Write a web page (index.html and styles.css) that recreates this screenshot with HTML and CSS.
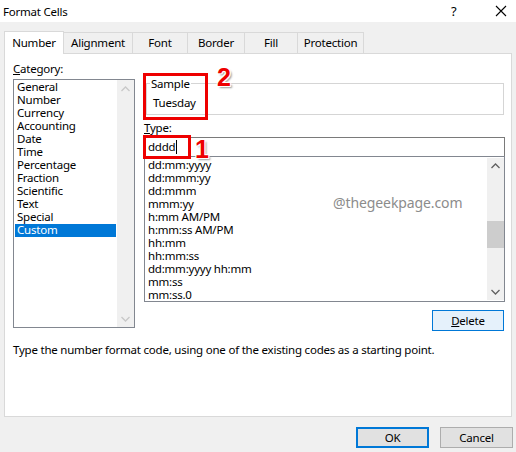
FILE: index.html
```html
<!DOCTYPE html>
<html>
<head>
<meta charset="utf-8">
<link rel="stylesheet" href="styles.css">
</head>
<body>
<div class="dialog">
  <div class="titlebar">
    <span class="title">Format Cells</span>
    <span class="help">?</span>
    <span class="close">
      <svg width="12" height="12" viewBox="0 0 12 12"><path d="M1 1 L11 11 M11 1 L1 11" stroke="#000" stroke-width="1.1" fill="none"/></svg>
    </span>
  </div>
  <div class="tabs">
    <div class="tab active">Number</div>
    <div class="tab w-align">Alignment</div>
    <div class="tab w-font">Font</div>
    <div class="tab w-border">Border</div>
    <div class="tab w-fill">Fill</div>
    <div class="tab w-prot">Protection</div>
  </div>
  <div class="panel">
    <div class="cols">
      <div class="leftcol">
        <div class="label"><u>C</u>ategory:</div>
        <div class="catlist">
          <div class="items">
            <div class="item">General</div>
            <div class="item">Number</div>
            <div class="item">Currency</div>
            <div class="item">Accounting</div>
            <div class="item">Date</div>
            <div class="item">Time</div>
            <div class="item">Percentage</div>
            <div class="item">Fraction</div>
            <div class="item">Scientific</div>
            <div class="item">Text</div>
            <div class="item">Special</div>
            <div class="item sel">Custom</div>
          </div>
          <div class="vscroll disabled">
            <svg class="arrow" width="9" height="6" viewBox="0 0 9 6"><path d="M0.5 5 L4.5 1 L8.5 5" stroke="#c8c8c8" stroke-width="1.3" fill="none"/></svg>
            <div class="track"></div>
            <svg class="arrow" width="9" height="6" viewBox="0 0 9 6"><path d="M0.5 1 L4.5 5 L8.5 1" stroke="#c8c8c8" stroke-width="1.3" fill="none"/></svg>
          </div>
        </div>
      </div>
      <div class="rightcol">
        <fieldset class="sample">
          <legend>Sample</legend>
          <div class="sampleval">Tuesday</div>
        </fieldset>
        <div class="label typelabel"><u>T</u>ype:</div>
        <div class="typeinput">dddd<span class="caret"></span></div>
        <div class="fmtlist">
          <div class="items">
            <div class="item">dd:mm:yyyy</div>
            <div class="item">dd:mmm:yy</div>
            <div class="item">dd:mmm</div>
            <div class="item">mmm:yy</div>
            <div class="item">h:mm AM/PM</div>
            <div class="item">h:mm:ss AM/PM</div>
            <div class="item">hh:mm</div>
            <div class="item">hh:mm:ss</div>
            <div class="item">dd:mm:yyyy hh:mm</div>
            <div class="item">mm:ss</div>
            <div class="item">mm:ss.0</div>
          </div>
          <div class="vscroll">
            <svg class="arrow" width="9" height="6" viewBox="0 0 9 6"><path d="M0.5 5 L4.5 1 L8.5 5" stroke="#606060" stroke-width="1.3" fill="none"/></svg>
            <div class="track"><div class="thumb"></div></div>
            <svg class="arrow" width="9" height="6" viewBox="0 0 9 6"><path d="M0.5 1 L4.5 5 L8.5 1" stroke="#606060" stroke-width="1.3" fill="none"/></svg>
          </div>
          <div class="watermark">@thegeekpage.com</div>
        </div>
        <div class="btnrow">
          <div class="btn delete"><u>D</u>elete</div>
        </div>
      </div>
    </div>
    <div class="desc">Type the number format code, using one of the existing codes as a starting point.</div>
  </div>
  <div class="footer">
    <div class="btn ok">OK</div>
    <div class="btn cancel">Cancel</div>
  </div>
  <div class="mark box2"></div>
  <div class="num n2">2</div>
  <div class="mark box1"></div>
  <div class="num n1">1</div>
</div>
</body>
</html>
```

FILE: styles.css
```css
* { box-sizing: border-box; }
html, body { margin: 0; padding: 0; }
body {
  width: 516px;
  height: 452px;
  overflow: hidden;
  background: #f0f0f0;
  font-family: "Noto Sans", "DejaVu Sans", sans-serif;
  font-size: 11.5px;
  letter-spacing: -0.22px;
  color: #000;
}
.dialog { position: relative; width: 516px; height: 452px; }
.titlebar {
  height: 22px;
  background: #fff;
  display: flex;
  align-items: center;
  padding-left: 3px;
}
.title { flex: 1; }
.help { width: 44px; font-size: 13px; }
.close { width: 21px; display: flex; align-items: center; }

.tabs {
  display: flex;
  align-items: flex-end;
  height: 31px;
  padding-left: 4px;
  padding-top: 8px;
}
.tab {
  height: 21px;
  border: 1px solid #d9d9d9;
  border-bottom: none;
  border-left: none;
  background: #f0f0f0;
  display: flex;
  align-items: center;
  justify-content: center;
  padding-bottom: 1px;
}
.tab.active {
  width: 60px;
  height: 23px;
  background: #fff;
  border-left: 1px solid #d9d9d9;
  margin-bottom: -1px;
  position: relative;
  z-index: 1;
  padding-bottom: 2px;
}
.w-align { width: 69px; }
.w-font { width: 55px; }
.w-border { width: 57px; }
.w-fill { width: 53px; }
.w-prot { width: 66px; }

.panel {
  margin-left: 4px;
  width: 508px;
  height: 364px;
  background: #fff;
  border: 1px solid #d9d9d9;
  padding: 6px 0 0 8px;
}
.cols { display: flex; gap: 9px; align-items: flex-start; }
.leftcol { width: 122px; padding-top: 1px; }
.label { height: 16px; line-height: 15px; }
.catlist {
  margin-top: 2px;
  height: 249px;
  border: 1px solid #828790;
  display: flex;
}
.items { flex: 1; padding: 1px 1px 0 1px; overflow: hidden; }
.item { height: 13px; line-height: 12px; padding-left: 2px; white-space: nowrap; }
.item.sel { background: #0078d7; color: #fff; }
.vscroll {
  width: 17px;
  background: #f0f0f0;
  display: flex;
  flex-direction: column;
  align-items: center;
}
.vscroll .arrow { margin: 5px 0; flex: none; }
.vscroll .track { flex: 1; width: 100%; position: relative; }
.catlist .vscroll .arrow:first-child { margin-top: 6px; }

.rightcol { width: 361px; }
.sample {
  margin: 16px 1px 0 2px;
  padding: 0 0 0 6px;
  height: 39px;
  border: 1px solid #d5d5d5;
}
.sample legend { padding: 0 1px; margin-left: -3px; line-height: 15px; }
.sampleval { line-height: 14px; margin-top: 5px; }
.typelabel { margin-top: 5px; height: 16px; }
.typeinput {
  margin-top: 1px;
  height: 20px;
  border: 1px solid #7a7a7a;
  padding-left: 3px;
  padding-bottom: 1px;
  line-height: 17px;
  display: flex;
  align-items: center;
}
.caret {
  display: inline-block;
  width: 1px;
  height: 14px;
  background: #000;
  margin-left: 1px;
}
.fmtlist {
  position: relative;
  margin-top: -1px;
  height: 146px;
  border: 1px solid #828790;
  display: flex;
}
.fmtlist .items { padding-top: 2px; }
.fmtlist .vscroll { margin: 1px 0; }
.fmtlist .vscroll .arrow:first-child { margin-top: 5px; }
.thumb {
  position: absolute;
  left: 0;
  right: 0;
  top: 47px;
  height: 27px;
  background: #cdcdcd;
}
.watermark {
  position: absolute;
  left: 188px;
  top: 36px;
  font-size: 14px;
  letter-spacing: -0.1px;
  color: #8c8c8c;
}
.btnrow { display: flex; justify-content: flex-end; margin-top: 8px; padding-right: 1px; }
.btn {
  height: 21px;
  display: flex;
  align-items: center;
  justify-content: center;
  background: #e1e1e1;
  border: 1px solid #adadad;
  padding-bottom: 1px;
}
.delete {
  width: 72px;
  background: #e5f1fb;
  border-color: #0078d7;
}
.desc { margin-top: 11px; line-height: 15px; }

.footer {
  display: flex;
  justify-content: flex-end;
  gap: 11px;
  padding-right: 3px;
  margin-top: 10px;
}
.ok { width: 73px; height: 21px; border: 2px solid #0078d7; }
.cancel { width: 73px; height: 21px; }

.mark {
  position: absolute;
  border: 3px solid #ee0000;
}
.box2 { left: 143px; top: 73px; width: 65px; height: 47px; }
.box1 { left: 143px; top: 135px; width: 48px; height: 24px; }
.num {
  position: absolute;
  font-family: "Liberation Sans", Arial, sans-serif;
  font-weight: bold;
  font-size: 25px;
  line-height: 25px;
  letter-spacing: 0;
  color: #ee0000;
  text-shadow: -1px -1px 0 #fff, 1px -1px 0 #fff, -1px 1px 0 #fff, 1px 1px 0 #fff, 2px 2px 2px #9a9a9a;
}
.n2 { left: 217px; top: 65px; }
.n1 { left: 195px; top: 137px; }
```
